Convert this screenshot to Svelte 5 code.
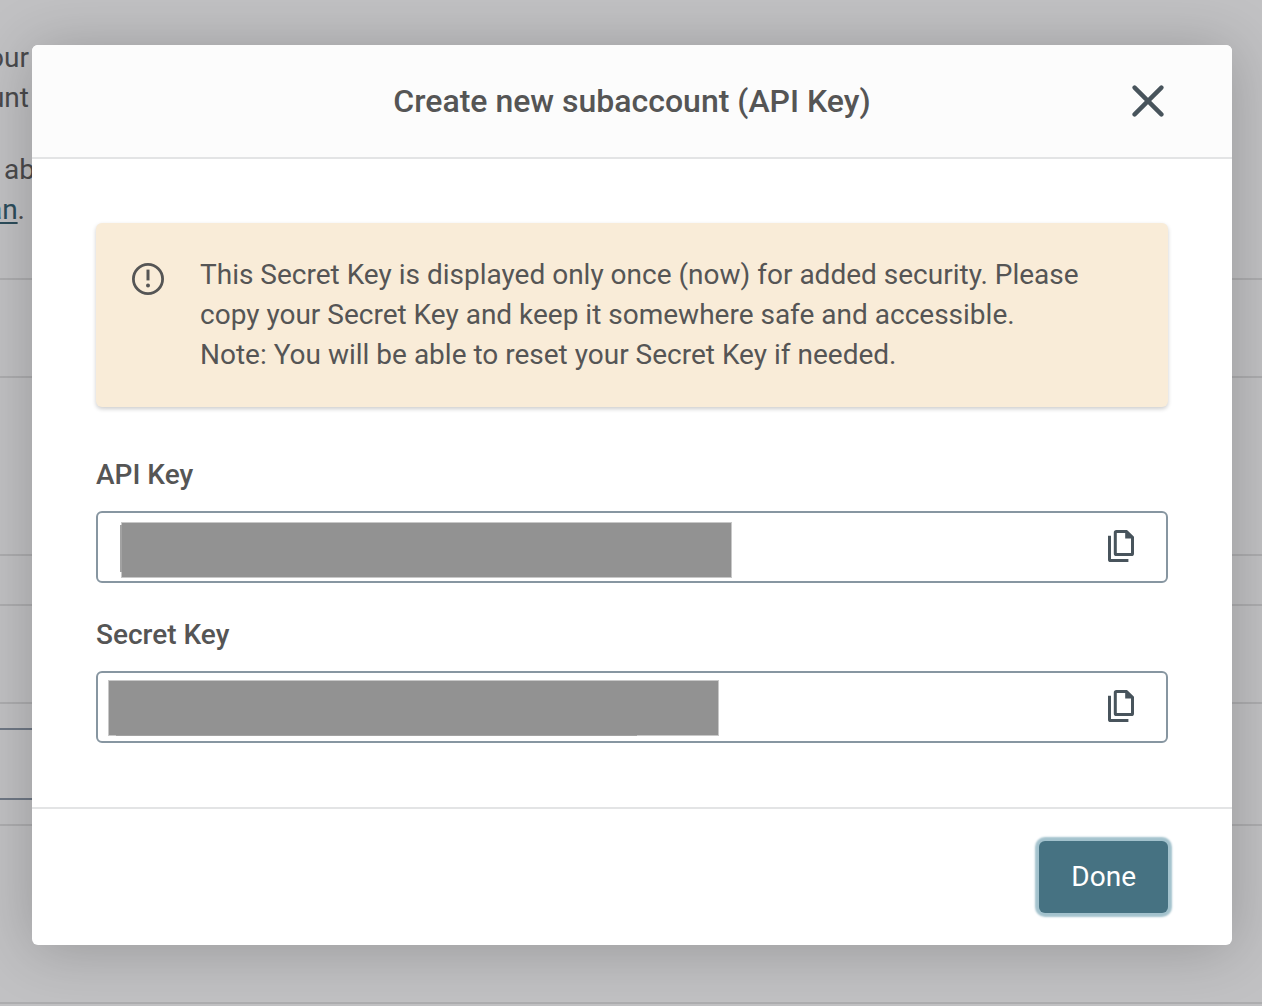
<script lang="ts">
	interface KeyField {
		id: string;
		label: string;
		mask: string;
	}

	let { title = 'Create new subaccount (API Key)', ondone }: { title?: string; ondone?: () => void } =
		$props();

	const fields: KeyField[] = [
		{ id: 'api-key', label: 'API Key', mask: 'mask-api' },
		{ id: 'secret-key', label: 'Secret Key', mask: 'mask-secret' }
	];
</script>

<div class="screen">
	<div class="page" aria-hidden="true">
		<div class="intro">
			<p><span>our</span><span>unt</span></p>
			<p><span class="cut">ab</span><span class="end"><a href="#plan" tabindex="-1">an</a>.</span></p>
		</div>
		<div class="row medium"></div>
		<div class="row tall"></div>
		<div class="row short"></div>
		<div class="row medium"></div>
		<div class="row filter"><div class="box"></div></div>
		<div class="row tall"></div>
		<div class="row"></div>
	</div>

	<div class="modal" role="dialog" aria-modal="true" aria-labelledby="modal-title">
		<header>
			<h1 id="modal-title">{title}</h1>
			<button class="icon close" aria-label="Close" onclick={() => ondone?.()}>
				<svg width="32" height="32" viewBox="0 0 32 32" fill="none" stroke="currentColor" stroke-width="4.4" stroke-linecap="round">
					<path d="M2.6 2.6 29.4 29.4M29.4 2.6 2.6 29.4" />
				</svg>
			</button>
		</header>

		<div class="body">
			<div class="alert" role="alert">
				<svg width="32" height="32" viewBox="0 0 32 32">
					<circle cx="16" cy="16" r="14.6" fill="none" stroke="currentColor" stroke-width="2.8" />
					<rect x="14.5" y="6.6" width="3" height="10.8" fill="currentColor" />
					<circle cx="16" cy="22.4" r="2" fill="currentColor" />
				</svg>
				<p>
					This Secret Key is displayed only once (now) for added security. Please copy your Secret Key
					and keep it somewhere safe and accessible.<br />
					Note: You will be able to reset your Secret Key if needed.
				</p>
			</div>

			{#each fields as field (field.id)}
				<div class="field">
					<label for={field.id}>{field.label}</label>
					<div class="control">
						<input id={field.id} type="text" readonly />
						<span class="mask {field.mask}"></span>
						<button class="icon" aria-label="Copy {field.label}">
							<svg width="26" height="34" viewBox="0 0 26 34">
								<path
									d="M8.4 1.5h10L24.5 7.4v16q0 1.1-1.1 1.1h-15q-1.1 0-1.1-1.1V2.6q0-1.1 1.1-1.1z"
									fill="none"
									stroke="currentColor"
									stroke-width="3"
								/>
								<path d="M17.2 1v7.6h7.8V6.6L19.5 1z" fill="currentColor" />
								<path
									d="M1.5 5.7v23.7q0 1.1 1.1 1.1h17.8"
									fill="none"
									stroke="currentColor"
									stroke-width="3"
								/>
							</svg>
						</button>
					</div>
				</div>
			{/each}
		</div>

		<footer>
			<button class="done" onclick={() => ondone?.()}>Done</button>
		</footer>
	</div>
</div>

<style>
	:global(body) {
		background: #c1c1c3;
	}
	.screen {
		position: relative;
		box-sizing: border-box;
		min-height: 100vh;
		padding: 45px 30px 61px 32px;
		overflow: hidden;
		font-family: Roboto, 'Liberation Sans', sans-serif;
		font-size: 28px;
		line-height: 40px;
		color: #555;
	}

	.page {
		position: absolute;
		inset: 0;
		overflow: hidden;
		color: #4a4a4c;
	}
	.intro {
		box-sizing: border-box;
		width: 29px;
		height: 278px;
		padding-top: 38px;
	}
	.intro p {
		margin: 0 0 32px;
	}
	.intro span {
		display: flex;
		justify-content: flex-end;
	}
	.intro .cut {
		justify-content: flex-start;
		padding-left: 4px;
	}
	.intro .end {
		padding-right: 4px;
	}
	.intro a {
		color: #2c4d5b;
		text-decoration-thickness: 2px;
		text-underline-offset: 3px;
	}
	.row {
		box-sizing: border-box;
		border-top: 2px solid #adadaf;
	}
	.medium {
		height: 98px;
	}
	.tall {
		height: 178px;
	}
	.short {
		height: 50px;
	}
	.filter {
		padding: 24px 64px 24px 0;
	}
	.box {
		box-sizing: border-box;
		height: 72px;
		border: 2px solid #6f7885;
		border-left: none;
	}

	.modal {
		position: relative;
		border-radius: 6px;
		background: #fff;
		box-shadow: 0 4px 60px rgba(0, 0, 0, 0.22);
	}
	header {
		display: grid;
		grid-template-columns: 32px 1fr 32px;
		align-items: center;
		height: 112px;
		padding: 0 68px;
		border-bottom: 2px solid #e3e4e5;
		border-radius: 6px 6px 0 0;
		background: #fcfcfc;
	}
	h1 {
		grid-column: 2;
		margin: 0;
		text-align: center;
		font-size: 32px;
		font-weight: 500;
	}
	.icon {
		display: flex;
		padding: 0;
		border: none;
		background: none;
		color: #48545c;
		cursor: pointer;
	}

	.body {
		display: flex;
		flex-direction: column;
		gap: 32px;
		padding: 64px;
	}
	.alert {
		display: flex;
		gap: 36px;
		margin-bottom: 16px;
		padding: 32px 36px;
		border-radius: 6px;
		background: #f9ecd8;
		box-shadow: 0 2px 4px rgba(0, 0, 0, 0.2);
	}
	.alert svg {
		flex: none;
		margin-top: 8px;
	}
	.alert p {
		margin: 0;
	}
	.field {
		display: flex;
		flex-direction: column;
		gap: 16px;
	}
	label {
		font-weight: 500;
	}
	.control {
		position: relative;
		box-sizing: border-box;
		display: flex;
		align-items: center;
		height: 72px;
		padding-right: 32px;
		border: 2px solid #8796a1;
		border-radius: 6px;
	}
	input {
		flex: 1;
		min-width: 0;
		height: 100%;
		padding: 0 24px;
		border: none;
		background: none;
		font: inherit;
		color: inherit;
		outline: none;
	}
	.mask {
		position: absolute;
		box-sizing: border-box;
		width: 611px;
		max-width: 80%;
		height: 56px;
		border: 1px solid #c8c8c8;
		background: #929292;
	}
	.mask::before {
		content: '';
		position: absolute;
		background: #a2a2a2;
	}
	.mask-api {
		top: 9px;
		left: 23px;
	}
	.mask-api::before {
		top: 2px;
		bottom: 5px;
		left: -2px;
		width: 2px;
	}
	.mask-secret {
		top: 7px;
		left: 10px;
	}
	.mask-secret::before {
		right: 81px;
		bottom: -1px;
		left: 7px;
		height: 1px;
	}

	footer {
		display: flex;
		justify-content: flex-end;
		padding: 32px 64px;
		border-top: 2px solid #e3e4e5;
	}
	.done {
		height: 72px;
		padding: 0 32px;
		border: none;
		border-radius: 6px;
		background: #467282;
		box-shadow: 0 0 2px 4px #a3c2cd;
		font: inherit;
		color: #fff;
		cursor: pointer;
	}
</style>
